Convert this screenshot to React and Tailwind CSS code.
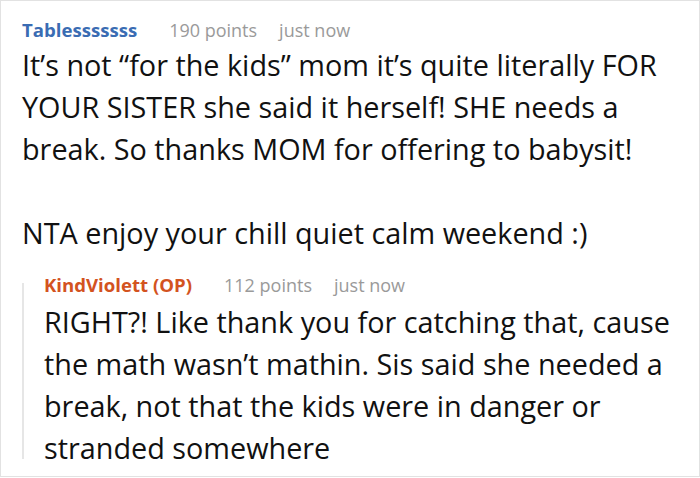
import React from 'react';

const Meta = ({ name, color, points }) => (
    <div className="flex items-center h-[24px] text-[18px] leading-[24px]">
        <span className={`font-bold text-[18.6px] ${color}`}>{name}</span>
        <span className="ml-[32px] text-[#9a9a9a]">{points} points</span>
        <span className="ml-[22px] text-[#9a9a9a]">just now</span>
    </div>
);

export default function App() {
    return (
        <div className="w-[700px] h-[477px] bg-white border border-[#e2e2e2] font-['Open_Sans',sans-serif] text-[#111] overflow-hidden">
            <div className="pl-[21px] pr-[20px] pt-[17px]">
                {/* Top comment */}
                <Meta name="Tablesssssss" color="text-[#3a6cb3]" points="190" />
                <p className="mt-[2px] text-[28.8px] leading-[42px]">
                    It’s not “for the kids” mom it’s quite literally FOR YOUR SISTER she said it herself! SHE needs a break. So thanks MOM for offering to babysit!
                    <br />
                    <br />
                    NTA enjoy your chill quiet calm weekend :)
                </p>

                {/* Reply thread */}
                <div className="mt-[19px] flex">
                    <div className="w-[2px] my-[10px] bg-[#e6e6e6] shrink-0"></div>
                    <div className="ml-[20px]">
                        <Meta name="KindViolett (OP)" color="text-[#d3531f]" points="112" />
                        <p className="mt-[4px] text-[28.8px] leading-[42px]">
                            RIGHT?! Like thank you for catching that, cause the math wasn’t mathin. Sis said she needed a break, not that the kids were in danger or stranded somewhere
                        </p>
                    </div>
                </div>
            </div>
        </div>
    );
}
